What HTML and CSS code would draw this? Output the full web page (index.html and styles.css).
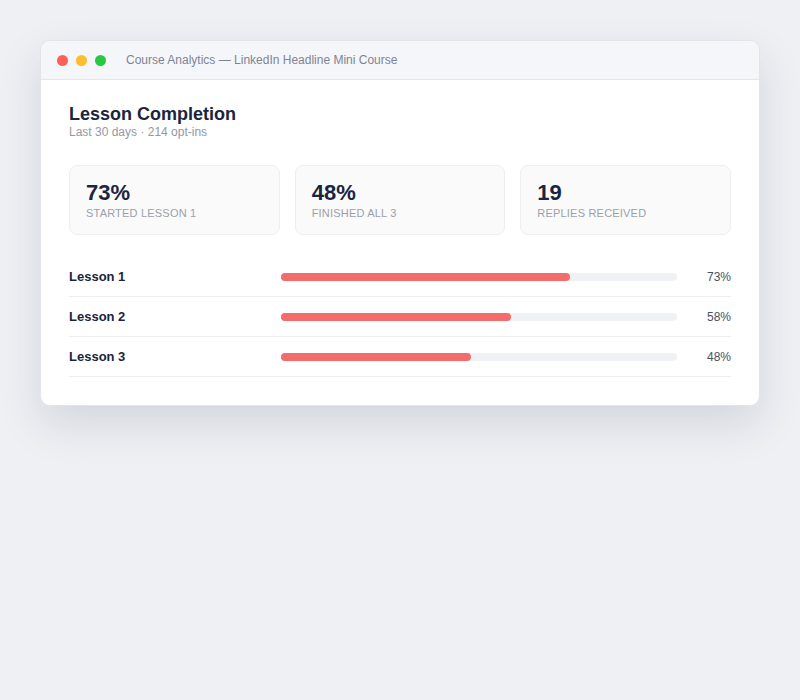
FILE: index.html
```html
<!DOCTYPE html>
<html lang="en">
<head>
    <meta charset="UTF-8">
    <meta name="viewport" content="width=device-width, initial-scale=1.0">
    <title>Course Analytics</title>
    <link rel="stylesheet" href="styles.css">
</head>
<body>
    <div class="window">
        <div class="titlebar">
            <span class="dot red"></span>
            <span class="dot yellow"></span>
            <span class="dot green"></span>
            <span class="window-title">Course Analytics — LinkedIn Headline Mini Course</span>
        </div>
        <div class="content">
            <h2>Lesson Completion</h2>
            <div class="subtitle">Last 30 days · 214 opt-ins</div>

            <div class="stats">
                <div class="stat">
                    <div class="stat-value">73%</div>
                    <div class="stat-label">Started Lesson 1</div>
                </div>
                <div class="stat">
                    <div class="stat-value">48%</div>
                    <div class="stat-label">Finished all 3</div>
                </div>
                <div class="stat">
                    <div class="stat-value">19</div>
                    <div class="stat-label">Replies received</div>
                </div>
            </div>

            <div class="lessons">
                <div class="lesson">
                    <span class="lesson-name">Lesson 1</span>
                    <div class="track"><div class="fill" style="width: 73%"></div></div>
                    <span class="pct">73%</span>
                </div>
                <div class="lesson">
                    <span class="lesson-name">Lesson 2</span>
                    <div class="track"><div class="fill" style="width: 58%"></div></div>
                    <span class="pct">58%</span>
                </div>
                <div class="lesson">
                    <span class="lesson-name">Lesson 3</span>
                    <div class="track"><div class="fill" style="width: 48%"></div></div>
                    <span class="pct">48%</span>
                </div>
            </div>
        </div>
    </div>
</body>
</html>
```

FILE: styles.css
```css
body {
    font-family: "Liberation Sans", Arial, sans-serif;
    margin: 0;
    padding: 40px;
    background-color: #eef0f4;
    height: 700px;
    box-sizing: border-box;
}
.window {
    background: #fff;
    border: 1px solid #e1e4ea;
    border-radius: 10px;
    box-shadow: 0 18px 44px rgba(30, 40, 70, 0.13);
    overflow: hidden;
}
.titlebar {
    display: flex;
    align-items: center;
    height: 38px;
    padding: 0 16px;
    background: #f5f6f9;
    border-bottom: 1px solid #e3e6ec;
}
.dot {
    width: 11px;
    height: 11px;
    border-radius: 50%;
    margin-right: 8px;
}
.red { background: #ff5f57; }
.yellow { background: #febc2e; }
.green { background: #28c840; }
.window-title {
    margin-left: 12px;
    font-size: 12px;
    color: #7d8494;
}
.content {
    padding: 23px 28px 28px;
}
.content h2 {
    margin: 0;
    font-size: 18px;
    line-height: 22px;
    color: #1a2540;
}
.subtitle {
    margin-top: 0;
    font-size: 12px;
    color: #9298a4;
}
.stats {
    display: grid;
    grid-template-columns: repeat(3, 1fr);
    gap: 15px;
    margin-top: 26px;
}
.stat {
    height: 70px;
    box-sizing: border-box;
    padding: 15px 16px;
    background: #fafafa;
    border: 1px solid #eceef1;
    border-radius: 8px;
}
.stat-value {
    font-size: 22px;
    font-weight: bold;
    line-height: 24px;
    color: #1a2540;
}
.stat-label {
    margin-top: 2px;
    font-size: 11px;
    letter-spacing: 0.2px;
    text-transform: uppercase;
    color: #9aa0aa;
}
.lessons {
    margin-top: 22px;
}
.lesson {
    display: grid;
    grid-template-columns: 200px 1fr 42px;
    gap: 12px;
    align-items: center;
    height: 40px;
    box-sizing: border-box;
    border-bottom: 1px solid #eceef1;
}
.lesson-name {
    font-size: 13px;
    font-weight: bold;
    color: #1a2540;
}
.track {
    height: 8px;
    background: #f0f1f4;
    border-radius: 4px;
}
.fill {
    height: 100%;
    background: #f46b6b;
    border-radius: 4px;
}
.pct {
    text-align: right;
    font-size: 12px;
    color: #4a5060;
}
```
